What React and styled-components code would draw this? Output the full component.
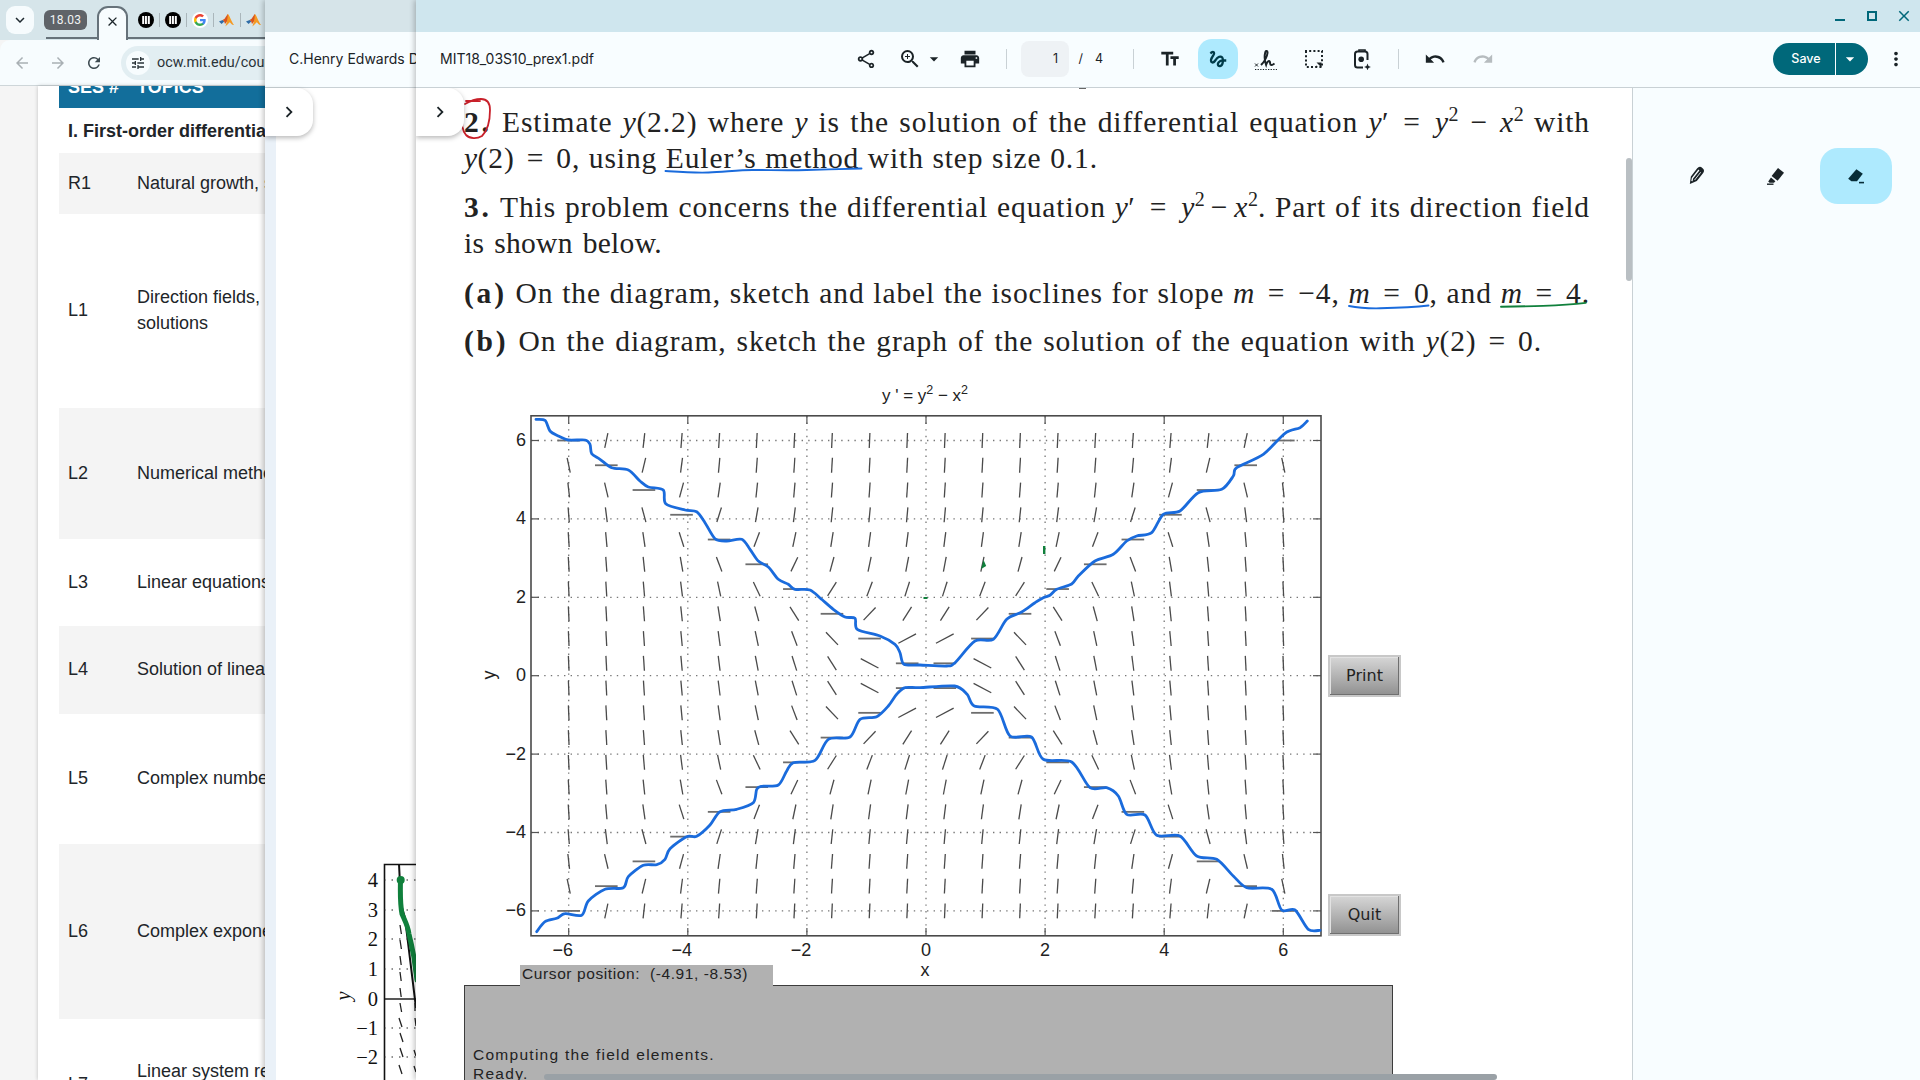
import React from "react";
import styled, { createGlobalStyle } from "styled-components";
import {
  MdOutlineShare, MdZoomIn, MdPrint, MdTextFields, MdGesture, MdUndo, MdRedo, MdMoreVert, MdTune,
  MdChevronRight, MdArrowBack, MdArrowForward, MdRefresh, MdClose, MdKeyboardArrowDown, MdArrowDropDown,
} from "react-icons/md";

const Global = createGlobalStyle`
  html, body { margin: 0; padding: 0; width: 1920px; height: 1080px; overflow: hidden; background: #fff; }
  #root { width: 1920px; height: 1080px; }
  * { box-sizing: border-box; }
`;

const Desktop = styled.div`display: flex; width: 1920px; height: 1080px; overflow: hidden; font-family: "Liberation Sans", Arial, sans-serif;`;

/* ---------- browser window ---------- */
const BrowserWindow = styled.div`width: 265px; flex: none; display: flex; flex-direction: column; overflow: hidden; background: #f5f5f5;`;
const TabStrip = styled.div`height: 40px; flex: none; display: flex; align-items: center; position: relative; background: #d6e5ea; padding-left: 6px;`;
const TabSearch = styled.div`width: 28px; height: 28px; border-radius: 9px; background: #f6fbfd; display: flex; align-items: center; justify-content: center; color: #1f2a30; font-size: 18px;`;
const GroupChip = styled.div`margin-left: 10px; width: 43px; height: 20px; border-radius: 6px; background: #5f6368; color: #f1f3f4; font: 12px Roboto, sans-serif; letter-spacing: .3px; display: flex; align-items: center; justify-content: center;`;
const GroupLine = styled.div`position: absolute; left: 46px; right: 0; bottom: 1px; height: 2px; background: #66727a;`;
const ActiveTab = styled.div`position: relative; z-index: 1; margin-left: 10px; align-self: flex-end; width: 31px; height: 34px; background: #f7fcfe; border: 2px solid #66727a; border-bottom: none; border-radius: 11px 11px 0 0; display: flex; align-items: center; justify-content: center; color: #1d262b; font-size: 15px; padding-bottom: 6px;`;
const Favicon = styled.svg`width: 16px; height: 16px; flex: none; margin-left: ${p => p.$gap}px;`;
const TabSep = styled.div`width: 1px; height: 14px; flex: none; margin-left: 5px; background: #aab6bb;`;

const BrowserBar = styled.div`height: 46px; flex: none; display: flex; align-items: center; background: #f7fcfe; border-bottom: 1px solid #ced6d9; border-radius: 10px 0 0 0; padding-left: 13px; color: #a9b0b4; font-size: 18px; gap: 18px;`;
const NavIcon = styled.div`width: 18px; height: 18px; flex: none; display: flex; color: ${p => p.$on ? "#3d4a50" : "#a9b0b4"};`;
const AddressPill = styled.div`height: 34px; flex: none; width: 200px; border-radius: 17px 0 0 17px; background: #e2eef2; display: flex; align-items: center; padding-left: 5px; overflow: hidden; white-space: nowrap; font: 14.4px Roboto, sans-serif; color: #2a3338;`;
const SiteCircle = styled.div`width: 24px; height: 24px; border-radius: 50%; background: #f7fcfe; display: flex; align-items: center; justify-content: center; margin-right: 7px; font-size: 16px; color: #2a3338; flex: none;`;

const WebPage = styled.div`flex: 1; min-height: 0; margin-left: 38px; background: #fff; box-shadow: 0 0 4px rgba(0,0,0,.22); padding-left: 21px; overflow: hidden;`;
const TableHead = styled.div`height: 22px; background: #126e9b; display: flex; align-items: flex-end; padding: 0 0 10px 9px; color: #fff; font-weight: bold; font-size: 18px; line-height: 22px; white-space: nowrap;`;
const HeadCell = styled.span`width: ${p => p.$w}px; flex: none;`;
const SectionRow = styled.div`height: 45px; display: flex; align-items: center; padding: 2px 0 0 9px; font-weight: bold; font-size: 18px; color: #212529; white-space: nowrap; overflow: hidden;`;
const DataRow = styled.div`height: ${p => p.$h}px; background: ${p => p.$shade ? "#f4f4f4" : "#fff"}; display: flex; align-items: center; padding: 0 0 2px 9px; font-size: 18px; line-height: 26px; color: #212529; white-space: nowrap; overflow: hidden;`;
const RowNum = styled.div`width: 69px; flex: none;`;

/* ---------- pdf windows ---------- */
const PdfWindow = styled.div`position: relative; z-index: ${p => p.$z}; flex: ${p => p.$grow ? "1" : `none`}; width: ${p => p.$w}px; display: flex; flex-direction: column; overflow: hidden; background: #fff; box-shadow: -2px 0 5px rgba(0,0,0,.22);`;
const TitleBar = styled.div`height: 32px; flex: none; background: ${p => p.$bg}; display: flex; justify-content: flex-end; align-items: center; padding-right: 11px; gap: 22px; color: #00687a;`;
const WinButton = styled.div`width: 10px; height: 10px; display: flex; align-items: center; justify-content: center; svg { flex: none; }`;
const MinLine = styled.div`width: 10px; height: 2px; background: #00687a; margin-top: 7px;`;
const MaxBox = styled.div`width: 10px; height: 10px; border: 2px solid #00687a; flex: none;`;
const PdfBar = styled.div`height: 56px; flex: none; background: #f8fdff; border-bottom: 1.5px solid #c9d1d5; display: flex; align-items: center; padding-bottom: 2px; font: 14px Inter, sans-serif; color: #1b2327; white-space: nowrap; overflow: hidden;`;
const DocTitle = styled.div`flex: none; width: ${p => p.$w}px; padding-left: ${p => p.$pad}px; overflow: hidden;`;
const ToolCell = styled.div`flex: none; width: ${p => p.$w || 40}px; height: 40px; margin-left: ${p => p.$ml || 0}px; display: flex; align-items: center; justify-content: center; font-size: ${p => p.$size || 22}px; border-radius: 14px; background: ${p => p.$on ? "#aeeafe" : "transparent"}; color: ${p => p.$dim ? "#b6bcbf" : p.$on ? "#003c4a" : "#1b2327"};`;
const BarSep = styled.div`flex: none; width: 1px; height: 20px; background: #c9d1d5; margin-left: ${p => p.$ml}px;`;
const PageInput = styled.div`flex: none; width: 48px; height: 36px; margin-left: ${p => p.$ml}px; border-radius: 8px; background: #eef2f5; display: flex; align-items: center; justify-content: flex-end; padding-right: 11px; font: 12.5px Inter, sans-serif;`;
const PageText = styled.div`flex: none; width: ${p => p.$w}px; text-align: right; font: 12.5px Inter, sans-serif;`;
const SaveGroup = styled.div`flex: none; margin-left: ${p => p.$ml}px; height: 32px; display: flex; border-radius: 16px; overflow: hidden; color: #fff; font: 500 12.5px Inter, sans-serif;`;
const SaveMain = styled.div`width: 62px; background: #00687a; display: flex; align-items: center; justify-content: center; padding-left: 4px;`;
const SaveCaret = styled.div`width: 32px; margin-left: 1px; background: #00687a; display: flex; align-items: center; justify-content: center; font-size: 20px; padding-right: 4px;`;

const FlapButton = styled.div`position: absolute; left: 0; top: ${p => p.$top}px; width: 48px; height: 48px; z-index: 3; background: #fff; border-radius: 0 16px 16px 0; box-shadow: 0 2px 5px rgba(0,0,0,.28); display: flex; align-items: center; justify-content: center; color: #1b2327; font-size: 22px;`;

const SideBody = styled.div`flex: 1; min-height: 0; display: flex; flex-direction: column; margin-left: 11px; background: #fff; box-shadow: -11px 0 0 #eaf1f8; justify-content: flex-end;`;
const SideChart = styled.svg`display: block; width: 140px; height: 220px; flex: none;`;

const PdfBody = styled.div`flex: 1; min-height: 0; display: flex;`;
const Viewport = styled.div`position: relative; flex: 1; min-width: 0; overflow: hidden; background: #fff;`;
const Doc = styled.div`padding: 16px 0 0 48px; width: 1174px; font-family: "Liberation Serif", "Times New Roman", serif; font-size: 29.5px; color: #222;`;
const Line = styled.div`height: 36px; line-height: 36px; width: ${p => p.$w}px; margin-top: ${p => p.$mt || 0}px; letter-spacing: ${p => p.$ls ?? 0.9}px; text-align: justify; text-align-last: justify; white-space: normal; overflow: visible;`;
const Bold = styled.b`font-weight: bold; letter-spacing: 2.8px;`;
const Var = styled.i`font-style: italic; letter-spacing: .5px;`;
const Sup = styled.sup`font-size: 20px; line-height: 0; vertical-align: 11px; letter-spacing: 0;`;
const Op = styled.span`margin: 0 ${p => p.$m}px;`;

const Figure = styled.div`display: flex; margin-top: 22px;`;
const PlotSvg = styled.svg`display: block; flex: none; width: 864px; height: 584px; overflow: visible;`;
const FigButtons = styled.div`flex: none; width: 73px; display: flex; flex-direction: column;`;
const FigButton = styled.div`height: 42px; margin-top: ${p => p.$mt}px; padding-bottom: 1px; background: linear-gradient(#d6d6d6, #b0b0b0 55%, #909090); border: 2px solid #c8c8c8; box-shadow: inset -1px -1px 0 #6f6f6f, inset 1px 1px 0 #e2e2e2; display: flex; align-items: center; justify-content: center; font: 16px "DejaVu Sans", sans-serif; color: #222;`;
const StatusStrip = styled.div`margin-left: 56px; width: 253px; height: 21px; background: #b1b1b1; font: 15.5px "Liberation Sans", sans-serif; letter-spacing: .6px; color: #222; padding: 0 0 0 2px; line-height: 17px; white-space: pre; position: relative; z-index: 1;`;
const GrayPanel = styled.div`width: 929px; height: 140px; background: #b1b1b1; border: 1.5px solid #3c3c3c; margin-top: -1px; padding: 60px 0 0 8px; font: 15.5px "Liberation Sans", sans-serif; letter-spacing: 1.27px; line-height: 18.5px; color: #222;`;

const InkLayer = styled.svg`position: absolute; left: 0; top: 0; width: 1216px; height: 992px; pointer-events: none; z-index: 2;`;
const VScroll = styled.div`position: absolute; right: 0; top: 70px; width: 6px; height: 123px; border-radius: 3px; background: #b9bfc3; z-index: 2;`;
const HScroll = styled.div`position: absolute; left: 128px; top: 986px; width: 953px; height: 6px; border-radius: 3px; background: #9aa1a6; z-index: 2;`;

const ToolPanel = styled.div`width: 288px; flex: none; border-left: 1.5px solid #c9d1d5; background: #f8fdff; display: flex; align-self: stretch; padding: 60px 0 0 27px; align-items: flex-start;`;
const PenCell = styled.div`width: 72px; height: 56px; margin-left: ${p => p.$ml || 0}px; border-radius: 18px; background: ${p => p.$on ? "#aeeafe" : "transparent"}; display: flex; align-items: center; justify-content: center;`;

/* ---------- chart data ---------- */
const X = v => 926 + v * 59.55;
const Y = v => 674.7 - v * 39.2;
const HALF = 0.19;
const GRID = Array.from({ length: 20 }, (_, i) => -6 + i * (12 / 19));

const conv = (list, ox, oy, sx = 3, sy = 3) => list.map(([a, b]) => [ox + a / sx, oy + b / sy]);
const smooth = pts => {
  let d = `M${pts[0][0].toFixed(1)} ${pts[0][1].toFixed(1)}`;
  for (let i = 0; i < pts.length - 1; i++) {
    const p0 = pts[Math.max(i - 1, 0)], p1 = pts[i], p2 = pts[i + 1], p3 = pts[Math.min(i + 2, pts.length - 1)];
    const c1 = [p1[0] + (p2[0] - p0[0]) / 7, p1[1] + (p2[1] - p0[1]) / 7];
    const c2 = [p2[0] - (p3[0] - p1[0]) / 7, p2[1] - (p3[1] - p1[1]) / 7];
    d += `C${c1[0].toFixed(1)} ${c1[1].toFixed(1)} ${c2[0].toFixed(1)} ${c2[1].toFixed(1)} ${p2[0].toFixed(1)} ${p2[1].toFixed(1)}`;
  }
  return d;
};

const topCurve = smooth([
  ...conv([[108,115],[135,118],[150,150],[175,165],[205,177],[255,177],[270,190],[275,218],[300,235],[335,260],[385,267],[420,300],[445,318],[490,327],[497,368],[555,387],[590,392],[615,425],[645,473],[680,480],[725,475],[750,505],[775,540],[805,558],[835,595],[865,610],[885,625],[930,627],[965,655],[1000,685],[1035,708],[1065,712],[1072,745],[1140,765],[1185,790],[1200,815],[1212,850],[1260,852],[1340,855],[1365,845],[1425,780],[1480,775]], 500, 380),
  ...conv([[20,655],[65,633],[105,605],[130,590],[150,583],[170,565],[215,549],[235,525],[285,480],[340,460],[380,420],[410,405],[455,395],[490,340],[540,330],[595,275],[665,265],[700,225],[710,200],[790,160],[855,97],[900,80],[922,60]], 1000, 400),
]);
const bottomCurve = smooth([
  ...conv([[50,752],[75,722],[110,712],[135,698],[185,703],[205,660],[255,625],[310,620],[325,587],[370,553],[410,551],[435,535],[450,503],[500,467],[530,466],[570,432],[600,392],[650,385],[700,365],[710,325],[725,316],[775,312],[800,270],[820,245],[885,238],[925,175],[990,168],[1020,115],[1070,107],[1105,75],[1130,40],[1155,20],[1200,20]], 520, 680),
  ...conv([[265,375],[300,400],[320,435],[385,445],[420,525],[480,528]], 860, 560, 2.8, 3),
  ...conv([[190,175],[275,183],[330,260],[380,260],[415,285],[440,340],[495,342],[530,403],[600,405],[650,465],[710,475],[760,525],[800,560],[875,565],[905,627],[945,627],[985,685],[1020,688]], 980, 700),
]);

const dashes = [];
GRID.forEach((gx, i) => GRID.forEach((gy, j) => {
  const s = gy * gy - gx * gx;
  const n = Math.sqrt(1 + s * s);
  const dx = HALF / n, dy = (HALF * s) / n;
  dashes.push({ k: `${i}-${j}`, x1: X(gx - dx), y1: Y(gy - dy), x2: X(gx + dx), y2: Y(gy + dy), flat: Math.abs(s) < 0.01 });
}));

const AXIS_TEXT = { fontFamily: '"Liberation Sans", sans-serif', fontSize: 18, fill: "#222" };
const xTicks = [-6, -4, -2, 0, 2, 4, 6];
const label = v => (v < 0 ? `\u2212${-v}` : `${v}`);

const FieldPlot = () => (
  <PlotSvg viewBox="464 380 864 584">
    <g stroke="#777" strokeWidth="1.3" strokeDasharray="1.4 5.2">
      {xTicks.map(t => <line key={t} x1={X(t)} x2={X(t)} y1="415" y2="935" />)}
      {xTicks.map(t => <line key={t} y1={Y(t)} y2={Y(t)} x1="531" x2="1321" />)}
    </g>
    {dashes.map(d => (
      <line key={d.k} x1={d.x1} y1={d.y1} x2={d.x2} y2={d.y2} stroke={d.flat ? "#6d6d6d" : "#4a4a4a"} strokeWidth={d.flat ? 1.8 : 1.3} />
    ))}
    <g stroke="#555" strokeWidth="1.2">
      {xTicks.map(t => <line key={t} x1={X(t)} x2={X(t)} y1="415" y2="423" />)}
      {xTicks.map(t => <line key={t} x1={X(t)} x2={X(t)} y1="935" y2="927" />)}
      {xTicks.map(t => <line key={t} y1={Y(t)} y2={Y(t)} x1="531" x2="539" />)}
      {xTicks.map(t => <line key={t} y1={Y(t)} y2={Y(t)} x1="1321" x2="1313" />)}
    </g>
    <rect x="531" y="414.8" width="790" height="520" fill="none" stroke="#4a4a4a" strokeWidth="1.6" />
    <path d={topCurve} fill="none" stroke="#1a6bdc" strokeWidth="2.8" strokeLinecap="round" strokeLinejoin="round" />
    <path d={bottomCurve} fill="none" stroke="#1a6bdc" strokeWidth="2.8" strokeLinecap="round" strokeLinejoin="round" />
    <path d="M981 568l2.6-9 2.6 6z" fill="#10803c" />
    <rect x="923.5" y="596" width="4" height="2" fill="#10803c" />
    <rect x="1043" y="545" width="2.4" height="8" fill="#10803c" />
    {xTicks.map(t => <text key={t} x={X(t) - (t < 0 ? 6 : 0)} y="955" textAnchor="middle" {...AXIS_TEXT}>{label(t)}</text>)}
    {xTicks.map(t => <text key={t} x="526" y={Y(t) + 5.5} textAnchor="end" {...AXIS_TEXT}>{label(t)}</text>)}
    <text x="925" y="975" textAnchor="middle" {...AXIS_TEXT}>x</text>
    <text transform="translate(495 674) rotate(-90)" textAnchor="middle" {...AXIS_TEXT}>y</text>
    <text x="925" y="400" textAnchor="middle" {...AXIS_TEXT} fontSize="17">
      y ' = y<tspan dy="-7" fontSize="12.5">2</tspan><tspan dy="7"> − x</tspan><tspan dy="-7" fontSize="12.5">2</tspan>
    </text>
  </PlotSvg>
);

const SIDE_TEXT = { fontFamily: '"Liberation Serif", serif', fontSize: 20.5, fill: "#111" };
const SideGraph = () => (
  <SideChart viewBox="276 860 140 220">
    <path d="M384.5 1080V864.5H416" fill="none" stroke="#111" strokeWidth="1.6" />
    <line x1="384" x2="416" y1="999" y2="999" stroke="#111" strokeWidth="1.4" />
    <path d="M399 864l2 40 4 14 11 90" fill="none" stroke="#111" strokeWidth="2" />
    <g stroke="#222" strokeWidth="1.3">
      <path d="M400 925l1.4 9M400 940l1.4 9M400 956l1.2 9M400 972l1.2 9M400 988l1.2 9M400 1003l1.6 9M399 1018l3 9M400 1033l3 9M400 1048l3 9M399 1065l3 9" />
      <path d="M415 1003v8M415 1018l1 8M414 1050l2 6M414 1066l2 6" />
    </g>
    <g stroke="#222" strokeWidth="1" strokeDasharray="1.5 6">
      <line x1="384" x2="416" y1="880" y2="880" /><line x1="384" x2="416" y1="910" y2="910" />
      <line x1="384" x2="416" y1="939" y2="939" /><line x1="384" x2="416" y1="969" y2="969" />
      <line x1="384" x2="416" y1="1028" y2="1028" /><line x1="384" x2="416" y1="1057" y2="1057" />
    </g>
    <path d="M400.5 880c-.5 18 0 26 1.5 34 3 7 6 12 7 20 3 12 6 26 8 46" fill="none" stroke="#10803c" strokeWidth="5" strokeLinecap="round" />
    <circle cx="400.7" cy="880" r="4" fill="#10803c" />
    {[[4, 887], [3, 917], [2, 946], [1, 976], [0, 1006], [-1, 1035], [-2, 1064]].map(([v, y]) => (
      <text key={v} x="378" y={y} textAnchor="end" {...SIDE_TEXT}>{label(v)}</text>
    ))}
    <text transform="translate(350 996) rotate(-90)" textAnchor="middle" {...SIDE_TEXT} fontStyle="italic">y</text>
  </SideChart>
);

const SignIcon = () => (
  <svg width="26" height="26" viewBox="0 0 26 26" fill="none" stroke="#1b2327">
    <path d="M2 17.5l3 3M5 17.5l-3 3" strokeWidth="1" />
    <path d="M8 19c3-3 6-8 6.5-12 .2-2.4-1.6-2.8-2.2-.8-.8 3-.6 8.8.8 12.6.8-3 3-5 3.8-3 .4 1.4-.2 3 1.3 3.2 1.1.1 2-.7 3.3-1.5" strokeWidth="2" />
    <path d="M2 23.5h22" strokeWidth="1.2" strokeDasharray="1.3 1.3" />
  </svg>
);
const SelectIcon = () => (
  <svg width="22" height="22" viewBox="0 0 22 22" fill="none" stroke="#1b2327">
    <path d="M3 4V3h16v16H3z" strokeWidth="2" strokeDasharray="2 2.2" />
    <path d="M18.5 19.5l-5-5h5z" fill="#1b2327" strokeWidth="0" />
    <path d="M14 19l-1-1" strokeWidth="1.4" />
  </svg>
);
const LensIcon = () => (
  <svg width="22" height="22" viewBox="0 0 22 22" fill="none" stroke="#1b2327">
    <path d="M8 3.5V2h6v1.5" strokeWidth="1.6" />
    <path d="M16.5 12V6a2.5 2.5 0 0 0-2.5-2.5H6.5A2.5 2.5 0 0 0 4 6v11a2.5 2.5 0 0 0 2.5 2.5H12" strokeWidth="2" />
    <circle cx="10.2" cy="11.2" r="2.8" fill="#1b2327" strokeWidth="0" />
    <path d="M16.5 15.5l1 2.4 2.4 1-2.4 1-1 2.4-1-2.4-2.4-1 2.4-1z" fill="#1b2327" strokeWidth="0" />
  </svg>
);
const PenIcon = () => (
  <svg width="20" height="20" viewBox="0 0 20 20">
    <g transform="rotate(38 10 10)">
      <path d="M6.2 3.5a3.8 3.8 0 0 1 7.6 0V13.5L10 20l-3.8-6.5z" fill="#1b2327" />
      <path d="M8.6 3.5V14l1.4 2.6" fill="none" stroke="#f8fdff" strokeWidth="1.3" />
      <path d="M11.4 4.2V14" stroke="#f8fdff" strokeWidth="0.8" />
    </g>
  </svg>
);
const MarkerIcon = () => (
  <svg width="18" height="18" viewBox="0 0 18 18">
    <path d="M11 .9l6 4.8-6.4 8-6-4.8z" fill="#1b2327" />
    <path d="M4 10.6l4.4 3.6-1.4 1.6H2.6L1.2 14.5z" fill="#1b2327" />
    <path d="M0 17.2h6.5" stroke="#1b2327" strokeWidth="1.4" />
  </svg>
);
const EraserIcon = () => (
  <svg width="18" height="18" viewBox="0 0 18 18">
    <path d="M9.4 2.2l6.4 4.6-5.8 7.4H4.4L1.2 11.8z" fill="#062d38" />
    <path d="M12 15.6h5" stroke="#062d38" strokeWidth="1.6" />
  </svg>
);
const MitIcon = ({ gap }) => (
  <Favicon $gap={gap} viewBox="0 0 16 16">
    <circle cx="8" cy="8" r="8" fill="#000" />
    <path d="M4.2 4h2v8h-2zM7 4h1.9v8H7zM9.8 4h2v8h-2z" fill="#fff" />
  </Favicon>
);
const GoogleIcon = ({ gap }) => (
  <Favicon $gap={gap} viewBox="0 0 24 24">
    <circle cx="12" cy="12" r="12" fill="#fff" />
    <path fill="#4285F4" d="M20.6 12.2c0-.6-.1-1.2-.2-1.8H12v3.4h4.8c-.2 1.1-.8 2-1.8 2.7v2.2h2.9c1.7-1.5 2.7-3.8 2.7-6.5z" />
    <path fill="#34A853" d="M12 21c2.4 0 4.4-.8 5.9-2.2L15 16.5c-.8.5-1.8.9-3 .9-2.3 0-4.3-1.6-5-3.7H4v2.3C5.5 19 8.5 21 12 21z" />
    <path fill="#FBBC05" d="M7 13.7c-.4-1.1-.4-2.3 0-3.4V8H4c-1.3 2.5-1.3 5.5 0 8z" />
    <path fill="#EA4335" d="M12 6.6c1.3 0 2.5.5 3.4 1.3L18 5.4C16.4 3.9 14.3 3 12 3 8.5 3 5.5 5 4 8l3 2.3c.7-2.1 2.7-3.7 5-3.7z" />
  </Favicon>
);
const MatlabIcon = ({ gap }) => (
  <Favicon $gap={gap} viewBox="0 0 16 16">
    <path d="M0 9.6l3.6-1.5 1.6 1.4L2.6 12z" fill="#2f6da8" />
    <path d="M3.6 8.1l2-1.3L8.7 2 10.4 6.5 6 12 5.2 9.5z" fill="#d9541e" />
    <path d="M8.7 2c1.4 0 3.6 7.5 6.3 11-2 .2-3.2-1.8-4.2-2.8C9.8 11 8 13 6.4 14.5 7.8 10 9 6 8.7 2z" fill="#f59a23" />
  </Favicon>
);

const HandInk = () => (
  <InkLayer viewBox="416 88 1216 992">
    <path d="M465 104c5-3 10-5 16-5 6 0 9 4 9 11 0 11-2 20-8 26-5 3-12 3-16-1-4-5-4-10-4-17M466 101h14" fill="none" stroke="#c8202a" strokeWidth="1.8" strokeLinecap="round" />
    <path d="M665.5 171c15 1 28 2 43 1.5 15-.5 30-2.5 44-2.5 18 0 36 .5 54 0 18-.5 38-1 55-1.5" fill="none" stroke="#1a6bdc" strokeWidth="1.9" strokeLinecap="round" />
    <path d="M1349 306c10 2 20 2.5 31 2.3 16-.4 33-1 48.5-2.8" fill="none" stroke="#1a6bdc" strokeWidth="1.9" strokeLinecap="round" />
    <path d="M1501 306.7c14-.2 28-.4 42-.8 16-.6 30-1.5 42.7-3" fill="none" stroke="#10803c" strokeWidth="1.9" strokeLinecap="round" />
    <path d="M1079 88h7" stroke="#333" strokeWidth="1.5" />
  </InkLayer>
);

const rows = [
  { id: "R1", h: 61, shade: true, t: ["Natural growth, separable"] },
  { id: "L1", h: 194, t: ["Direction fields, integral curves,", "solutions"] },
  { id: "L2", h: 131, shade: true, t: ["Numerical methods"] },
  { id: "L3", h: 87, t: ["Linear equations"] },
  { id: "L4", h: 88, shade: true, t: ["Solution of linear equations"] },
  { id: "L5", h: 130, t: ["Complex numbers"] },
  { id: "L6", h: 175, shade: true, t: ["Complex exponentials"] },
  { id: "L7", h: 132, t: ["Linear system response to", "exponential input"] },
];

export default function App() {
  return (
    <>
      <Global />
      <Desktop>
        <BrowserWindow>
          <TabStrip>
            <GroupLine />
            <TabSearch><MdKeyboardArrowDown /></TabSearch>
            <GroupChip>18.03</GroupChip>
            <ActiveTab><MdClose /></ActiveTab>
            <MitIcon gap={10} />
            <TabSep />
            <MitIcon gap={5} />
            <TabSep />
            <GoogleIcon gap={5} />
            <TabSep />
            <MatlabIcon gap={5} />
            <TabSep />
            <MatlabIcon gap={5} />
          </TabStrip>
          <BrowserBar>
            <NavIcon><MdArrowBack size={18} /></NavIcon>
            <NavIcon><MdArrowForward size={18} /></NavIcon>
            <NavIcon $on><MdRefresh size={18} /></NavIcon>
            <AddressPill>
              <SiteCircle><MdTune /></SiteCircle>
              ocw.mit.edu/courses/18-03
            </AddressPill>
          </BrowserBar>
          <WebPage>
            <TableHead>
              <HeadCell $w={69}>SES #</HeadCell>
              <HeadCell $w={100}>TOPICS</HeadCell>
            </TableHead>
            <SectionRow>I. First-order differential equations</SectionRow>
            {rows.map(r => (
              <DataRow key={r.id} $h={r.h} $shade={r.shade}>
                <RowNum>{r.id}</RowNum>
                <div>{r.t.map(s => <div key={s}>{s}</div>)}</div>
              </DataRow>
            ))}
          </WebPage>
        </BrowserWindow>

        <PdfWindow $z={1} $w={151}>
          <TitleBar $bg="#d6e4e9" />
          <PdfBar><DocTitle $w={151} $pad={24}>C.Henry Edwards David</DocTitle></PdfBar>
          <FlapButton $top={88}><MdChevronRight /></FlapButton>
          <SideBody><SideGraph /></SideBody>
        </PdfWindow>

        <PdfWindow $z={2} $grow>
          <TitleBar $bg="#cfe6ee">
            <WinButton><MinLine /></WinButton>
            <WinButton><MaxBox /></WinButton>
            <WinButton><MdClose size={18} /></WinButton>
          </TitleBar>
          <PdfBar>
            <DocTitle $w={430} $pad={24}>MIT18_03S10_prex1.pdf</DocTitle>
            <ToolCell><MdOutlineShare /></ToolCell>
            <ToolCell $ml={4}><MdZoomIn size={24} /></ToolCell>
            <ToolCell $w={20} $ml={-6}><MdArrowDropDown /></ToolCell>
            <ToolCell $ml={6}><MdPrint /></ToolCell>
            <BarSep $ml={16} />
            <PageInput $ml={14}>1</PageInput>
            <PageText $w={14}>/</PageText>
            <PageText $w={20}>4</PageText>
            <BarSep $ml={30} />
            <ToolCell $ml={16}><MdTextFields /></ToolCell>
            <ToolCell $ml={8} $on><MdGesture /></ToolCell>
            <ToolCell $ml={8}><SignIcon /></ToolCell>
            <ToolCell $ml={8}><SelectIcon /></ToolCell>
            <ToolCell $ml={8}><LensIcon /></ToolCell>
            <BarSep $ml={16} />
            <ToolCell $ml={16}><MdUndo /></ToolCell>
            <ToolCell $ml={8} $dim><MdRedo /></ToolCell>
            <SaveGroup $ml={270}>
              <SaveMain>Save</SaveMain>
              <SaveCaret><MdArrowDropDown /></SaveCaret>
            </SaveGroup>
            <ToolCell $w={24} $ml={16}><MdMoreVert /></ToolCell>
          </PdfBar>
          <PdfBody>
            <Viewport>
              <FlapButton $top={0}><MdChevronRight /></FlapButton>
              <HandInk />
              <VScroll />
              <HScroll />
              <Doc>
                <Line $w={1126}><Bold>2.</Bold> Estimate <Var>y</Var>(2.2) where <Var>y</Var> is the solution of the differential equation <Var>y</Var>′<Op $m={14}>=</Op><Var>y</Var><Sup>2</Sup><Op $m={12}>−</Op><Var>x</Var><Sup>2</Sup> with</Line>
                <Line $w={634}><Var>y</Var>(2)<Op $m={12}>=</Op>0, using Euler’s method with step size 0.1.</Line>
                <Line $w={1126} $mt={13}><Bold>3.</Bold> This problem concerns the differential equation <Var>y</Var>′<Op $m={14}>=</Op><Var>y</Var><Sup>2</Sup><Op $m={6}>−</Op><Var>x</Var><Sup>2</Sup>. Part of its direction field</Line>
                <Line $w={198} $ls={0.3}>is shown below.</Line>
                <Line $w={1126} $mt={14}><Bold>(a)</Bold> On the diagram, sketch and label the isoclines for slope <Var>m</Var><Op $m={13}>=</Op>−4, <Var>m</Var><Op $m={13}>=</Op>0, and <Var>m</Var><Op $m={13}>=</Op>4.</Line>
                <Line $w={1078} $mt={12}><Bold>(b)</Bold> On the diagram, sketch the graph of the solution of the equation with <Var>y</Var>(2)<Op $m={12}>=</Op>0.</Line>
                <Figure>
                  <FieldPlot />
                  <FigButtons>
                    <FigButton $mt={274}>Print</FigButton>
                    <FigButton $mt={197}>Quit</FigButton>
                  </FigButtons>
                </Figure>
                <StatusStrip>Cursor position:  (-4.91, -8.53)</StatusStrip>
                <GrayPanel>Computing the field elements.<br />Ready.</GrayPanel>
              </Doc>
            </Viewport>
            <ToolPanel>
              <PenCell><PenIcon /></PenCell>
              <PenCell $ml={8}><MarkerIcon /></PenCell>
              <PenCell $ml={8} $on><EraserIcon /></PenCell>
            </ToolPanel>
          </PdfBody>
        </PdfWindow>
      </Desktop>
    </>
  );
}
